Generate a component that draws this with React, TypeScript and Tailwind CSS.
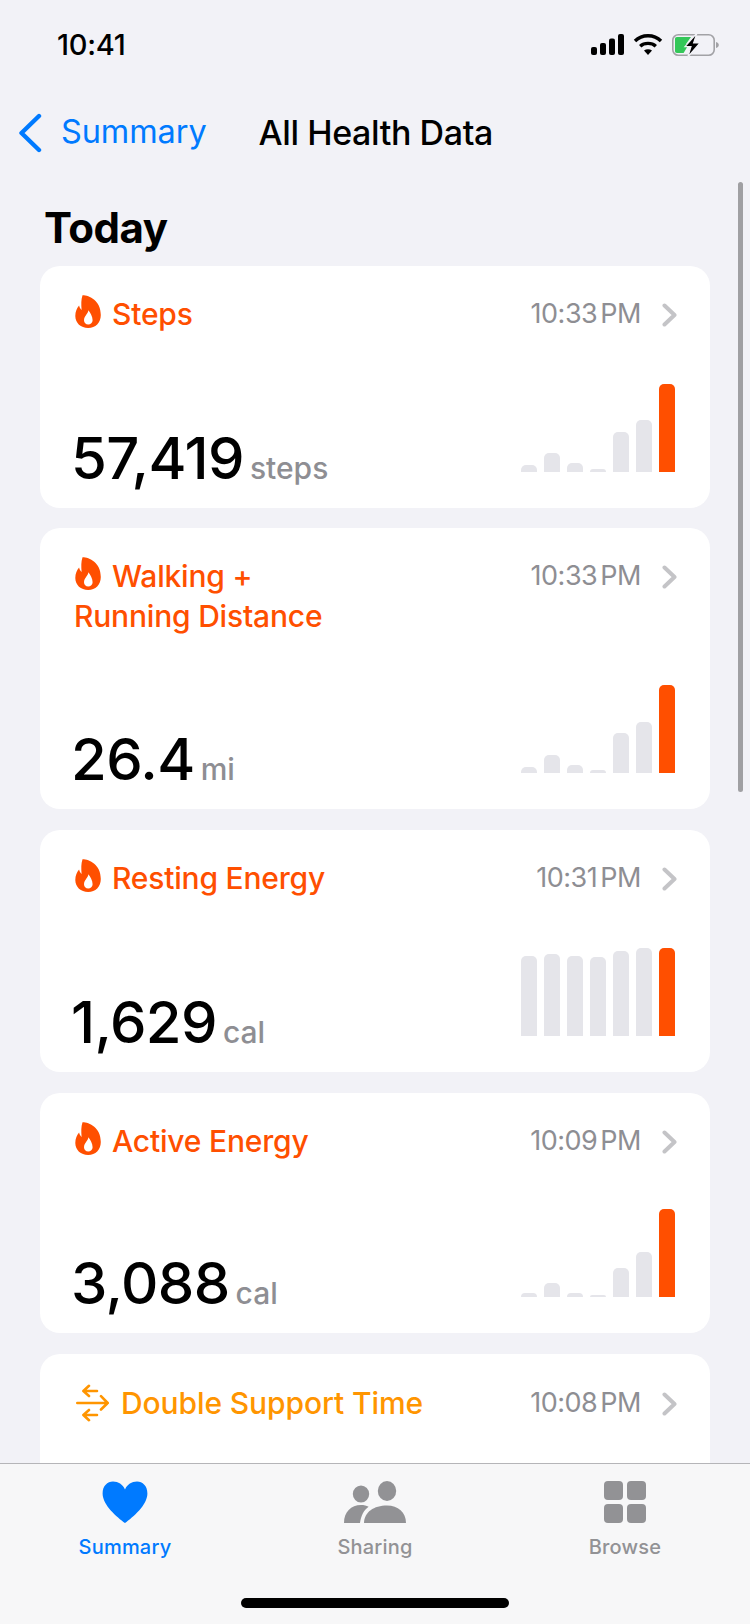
import React from "react";

const F = "font-['Inter','Noto_Sans',sans-serif]";

function Flame({ className = "" }: { className?: string }) {
  return (
    <svg viewBox="0 0 26 33" className={className} fill="#ff4f00">
      <path
        fillRule="evenodd"
        d="M7.5 0.2C14.5 0.3 25.8 5.5 25.8 20C25.8 27.8 20.5 33 13.2 33C5.8 33 0.3 28 0.3 21C0.3 16.6 2 13.2 4.1 10.6C4.6 12.6 5.3 14 6.6 14.9C6.2 9.4 6 4.6 7.5 0.2ZM13.3 15.2C13.6 18 9 20.8 9 25.2C9 27.8 10.8 29.4 13.2 29.4C15.6 29.4 17.6 27.8 17.6 25.2C17.6 21.4 15.3 17.6 13.3 15.2Z"
      />
    </svg>
  );
}

function Arrows({ className = "" }: { className?: string }) {
  return (
    <svg viewBox="0 0 33 38" className={className} fill="none" stroke="#ff9500" strokeWidth="2.6" strokeLinecap="round" strokeLinejoin="round">
      <path d="M13 1.8L7.4 7H21M7.4 7L13 12" />
      <path d="M1.3 19H31.7M25 12.2L31.7 19L25 25.5" />
      <path d="M13 26L7.4 31H21M7.4 31L13 36.2" />
    </svg>
  );
}

function Chevron() {
  return (
    <svg viewBox="0 0 15 24" className="w-[15px] h-[24px] shrink-0 mt-[2px] -mr-[2px]" fill="none" stroke="#c4c4c7" strokeWidth="4" strokeLinecap="round" strokeLinejoin="round">
      <path d="M2.5 2.5L12.5 12L2.5 21.5" />
    </svg>
  );
}

function Bars({ heights }: { heights: number[] }) {
  return (
    <div className="flex items-end gap-[7px] h-[88px] mb-[16px]">
      {heights.map((h, i) => (
        <div
          key={i}
          className={`w-[16px] rounded-t-[5px] ${i === heights.length - 1 ? "bg-[#ff4f00]" : "bg-[#e5e5ea]"}`}
          style={{ height: h }}
        />
      ))}
    </div>
  );
}

function Time({ children }: { children: string }) {
  return <span className="text-[#8e8e93] text-[27px] tracking-[-0.5px] [word-spacing:-4px] mr-[21px]">{children}</span>;
}

type CardProps = {
  title: React.ReactNode;
  time: string;
  value: string;
  unit: string;
  bars: number[];
  heightClass: string;
};

function Card({ title, time, value, unit, bars, heightClass }: CardProps) {
  return (
    <div className={`bg-white rounded-[20px] pl-[34px] pr-[35px] flex flex-col justify-between ${heightClass}`}>
      <div className="flex justify-between items-start pt-[28px]">
        <div className="text-[#ff4f00] text-[30px] leading-[40px] font-medium tracking-[-0.2px]">{title}</div>
        <div className="flex items-center h-[40px]">
          <Time>{time}</Time>
          <Chevron />
        </div>
      </div>
      <div className="flex justify-between items-end pb-[20px]">
        <div className="flex items-baseline h-[60px] -ml-[3px]">
          <span className="text-black text-[58px] leading-[60px] font-medium tracking-[-0.6px]">{value}</span>
          <span className="text-[#8e8e93] text-[30px] font-medium ml-[6px]">{unit}</span>
        </div>
        <Bars heights={bars} />
      </div>
    </div>
  );
}

function FlameTitle({ children }: { children: React.ReactNode }) {
  return (
    <>
      <Flame className="inline-block w-[26px] h-[33px] ml-[1px] mr-[11px] align-[-3px]" />
      {children}
    </>
  );
}

function StatusIcons() {
  return (
    <svg viewBox="0 0 130 26" className="w-[130px] h-[26px]">
      <g fill="#000">
        <rect x="1" y="15" width="6" height="8" rx="2" />
        <rect x="10" y="11" width="6" height="12" rx="2" />
        <rect x="19" y="6.5" width="6" height="16.5" rx="2" />
        <rect x="28" y="2" width="6" height="21" rx="2" />
      </g>
      <g fill="none" stroke="#000" strokeWidth="3.4">
        <path d="M45 9C52 2 64 2 71 9" />
        <path d="M50.2 14.2C54.2 10.4 61.8 10.4 65.8 14.2" />
      </g>
      <path d="M54 18.6C56.4 16.8 59.6 16.8 62 18.6L58 23Z" fill="#000" />
      <rect x="82.8" y="2.8" width="41.4" height="20.4" rx="5.5" fill="none" stroke="#a2a2a6" strokeWidth="1.6" />
      <path d="M126 10V16C128 15.5 128.8 14.4 128.8 13C128.8 11.6 128 10.5 126 10Z" fill="#a2a2a6" />
      <path d="M87 5H101L96 12H99L93.6 21H87C85.6 21 85 20.3 85 19V7C85 5.7 85.6 5 87 5Z" fill="#34c759" />
      <path d="M107 1L95 14.6H101L97.8 25L110 11H103.6Z" fill="#000" stroke="#f2f2f7" strokeWidth="1.2" />
    </svg>
  );
}

function TabItem({ label, active, icon }: { label: string; active?: boolean; icon: React.ReactNode }) {
  return (
    <div className="flex flex-col items-center w-[250px]">
      <div className="h-[42px] flex items-end">{icon}</div>
      <span className={`mt-[11px] text-[20px] leading-[26px] font-medium tracking-[0.2px] ${active ? "text-[#007aff]" : "text-[#929295]"}`}>{label}</span>
    </div>
  );
}

export default function App() {
  return (
    <div className={`${F} relative w-[750px] h-[1624px] overflow-hidden bg-[#f2f2f7] flex flex-col`}>
      <div className="flex justify-between items-center h-[90px] pl-[57px] pr-[30px] shrink-0">
        <span className="text-[29px] font-medium text-black tracking-[-0.3px]">10:41</span>
        <StatusIcons />
      </div>

      <div className="flex items-center h-[85px] pl-[18px] shrink-0">
        <svg viewBox="0 0 24 40" className="w-[24px] h-[40px]" fill="none" stroke="#007aff" strokeWidth="4.4" strokeLinecap="round" strokeLinejoin="round">
          <path d="M21 3L3.5 20L21 37" />
        </svg>
        <span className="ml-[19px] text-[32.5px] text-[#007aff] tracking-[-0.1px]">Summary</span>
        <span className="ml-[52px] text-[34px] font-medium text-black tracking-[-0.4px]">All Health Data</span>
      </div>

      <div className="flex-1 min-h-0 overflow-hidden px-[40px]">
        <h1 className="mt-[26px] mb-[12px] ml-[4px] text-[42px] leading-[53px] font-bold text-black tracking-[-0.5px]">Today</h1>
        <div className="flex flex-col gap-[21px]">
          <Card heightClass="h-[242px]" title={<FlameTitle>Steps</FlameTitle>} time="10:33 PM" value="57,419" unit="steps" bars={[7, 19, 9, 3, 40, 52, 88]} />
          <Card
            heightClass="h-[281px] -mt-[1px]"
            title={<FlameTitle>Walking +<br />Running Distance</FlameTitle>}
            time="10:33 PM"
            value="26.4"
            unit="mi"
            bars={[6, 18, 8, 3, 40, 51, 88]}
          />
          <Card heightClass="h-[242px]" title={<FlameTitle>Resting Energy</FlameTitle>} time="10:31 PM" value="1,629" unit="cal" bars={[80, 82, 80, 79, 85, 88, 88]} />
          <Card heightClass="h-[240px]" title={<FlameTitle>Active Energy</FlameTitle>} time="10:09 PM" value="3,088" unit="cal" bars={[4, 14, 4, 2, 29, 45, 88]} />
          <div className="bg-white rounded-[20px] h-[242px] pl-[36px] pr-[35px] pt-[29px]">
            <div className="flex justify-between items-start">
              <div className="flex items-center h-[40px]">
                <Arrows className="w-[33px] h-[38px] mr-[12px]" />
                <span className="text-[#ff9500] text-[30px] font-medium tracking-[-0.1px]">Double Support Time</span>
              </div>
              <div className="flex items-center h-[40px]">
                <Time>10:08 PM</Time>
                <Chevron />
              </div>
            </div>
          </div>
        </div>
      </div>

      <div className="shrink-0 h-[161px] border-t border-[#b5b5b8] bg-[#f7f7f8] relative">
        <div className="flex justify-between pt-[17px]">
          <TabItem
            label="Summary"
            active
            icon={
              <svg viewBox="0 0 46 42" className="w-[46px] h-[42px]" fill="#007aff">
                <path d="M23 42C15 36 0.6 24 0.6 12.4C0.6 5 5.4 0.6 11 0.6C16.4 0.6 20.6 3.6 23 8.4C25.4 3.6 29.6 0.6 35 0.6C40.6 0.6 45.4 5 45.4 12.4C45.4 24 31 36 23 42Z" />
              </svg>
            }
          />
          <TabItem
            label="Sharing"
            icon={
              <svg viewBox="0 0 62 42" className="w-[62px] h-[42px]" fill="#929295">
                <ellipse cx="17" cy="13" rx="8.2" ry="8.6" />
                <ellipse cx="43" cy="10" rx="9.2" ry="10" />
                <path d="M0 42C0 31 7 24 17 24C20 24 22.4 24.6 24.6 25.8C19.6 29.4 17 35 16 42Z" />
                <path d="M20 42C20 31 30 24.4 43 24.4C54 24.4 62 31 62 42Z" />
              </svg>
            }
          />
          <TabItem
            label="Browse"
            icon={
              <svg viewBox="0 0 42 42" className="w-[42px] h-[42px]" fill="#929295">
                <rect x="0" y="0" width="19" height="19" rx="4" />
                <rect x="23" y="0" width="19" height="19" rx="4" />
                <rect x="0" y="23" width="19" height="19" rx="4" />
                <rect x="23" y="23" width="19" height="19" rx="4" />
              </svg>
            }
          />
        </div>
      </div>

      <div className="absolute left-[241px] top-[1598px] w-[268px] h-[10px] rounded-full bg-black" />
      <div className="absolute left-[738px] top-[182px] w-[5px] h-[610px] rounded-full bg-[#a0a0a3]" />
    </div>
  );
}
